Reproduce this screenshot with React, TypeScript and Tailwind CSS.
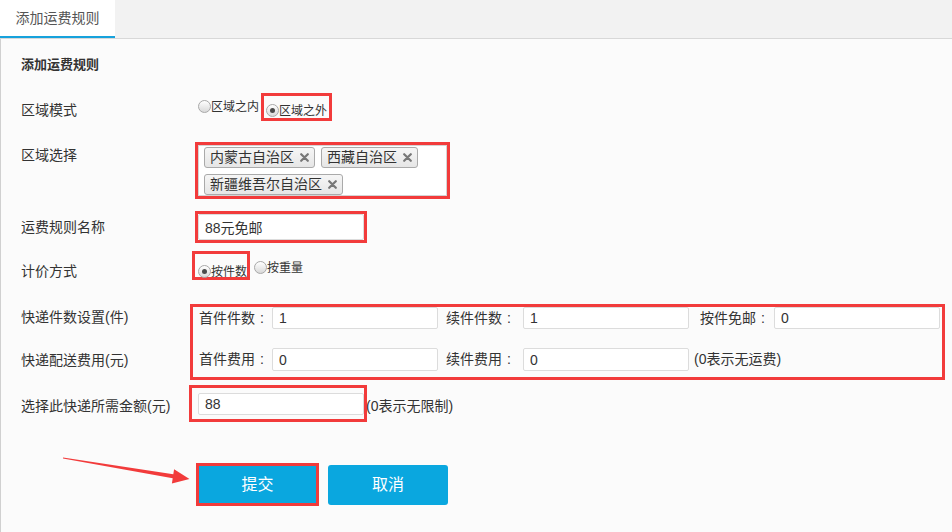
import React from "react";

const RED = "border-[#f23b3b]";

function Radio({ checked, label }: { checked?: boolean; label: string }) {
  return (
    <span className="inline-flex items-center h-[16px]">
      <span className="w-[13px] h-[13px] rounded-full border border-[#a8a8a8] bg-linear-to-b from-white to-[#d9d9d9] flex items-center justify-center shrink-0">
        {checked && <span className="w-[5px] h-[5px] rounded-full bg-[#4a4a4a]" />}
      </span>
      <span className="text-[12px] leading-[16px] pt-[1px] text-[#333]">{label}</span>
    </span>
  );
}

function Tag({ label }: { label: string }) {
  return (
    <span className="inline-flex items-center gap-[6px] h-[21px] px-[5px] border border-[#aaaaaa] rounded-[3px] bg-linear-to-b from-[#f6f6f6] to-[#e6e6e6] text-[14px] leading-[19px] text-[#333]">
      {label}
      <svg width="9" height="9" viewBox="0 0 9 9">
        <path d="M1.2 1.2 L7.8 7.8 M7.8 1.2 L1.2 7.8" stroke="#777" strokeWidth="2.2" strokeLinecap="round" />
      </svg>
    </span>
  );
}

function Field({ value, className = "" }: { value: string; className?: string }) {
  return (
    <input
      readOnly
      defaultValue={value}
      className={`w-[166px] bg-white border border-[#dcdcdc] rounded-[2px] px-[6px] text-[14px] text-[#333] outline-none ${className}`}
    />
  );
}

function Label({ children, className = "" }: { children: React.ReactNode; className?: string }) {
  return <div className={`w-[168px] shrink-0 text-[14px] leading-[20px] text-[#333] ${className}`}>{children}</div>;
}

function Caption({ text, className = "" }: { text: string; className?: string }) {
  return (
    <span className={`flex ${className}`}>
      {text}
      <span className="w-[14px] text-center">:</span>
    </span>
  );
}

export default function App() {
  return (
    <div className="relative w-[952px] h-[532px] overflow-hidden bg-[#fbfbfb] font-['Liberation_Sans','Noto_Sans_CJK_SC',sans-serif]">
      {/* tabs */}
      <div className="h-[39px] bg-[#f2f2f2] border-b border-[#d8d8d8] flex">
        <div className="w-[115px] h-[38px] bg-white border-b-2 border-[#17a2dc] flex items-center justify-center text-[14px] text-[#555]">
          添加运费规则
        </div>
      </div>

      <div className="border-l border-[#d0d0d0] h-[493px] pl-[20px]">
        <div className="pt-[16px] text-[13px] leading-[20px] font-bold text-[#333]">添加运费规则</div>

        {/* 区域模式 */}
        <div className="flex mt-[18px]">
          <Label className="pt-[7px]">区域模式</Label>
          <div className="flex items-start ml-[9px]">
            <div className="mt-[3px]">
              <Radio label="区域之内" />
            </div>
            <div className={`ml-[2px] h-[28px] border-[3px] ${RED} px-[2px]`}>
              <Radio checked label="区域之外" />
            </div>
          </div>
        </div>

        {/* 区域选择 */}
        <div className="flex mt-[21px]">
          <Label className="pt-[3px]">区域选择</Label>
          <div className={`ml-[6px] w-[255px] h-[57px] border-[3px] ${RED}`}>
            <div className="w-full h-full bg-white border border-[#d4d4d4] flex flex-wrap content-start gap-[6px] pl-[5px] pt-[1px]">
              <Tag label="内蒙古自治区" />
              <Tag label="西藏自治区" />
              <Tag label="新疆维吾尔自治区" />
            </div>
          </div>
        </div>

        {/* 运费规则名称 */}
        <div className="flex mt-[12px]">
          <Label className="pt-[6px]">运费规则名称</Label>
          <div className={`ml-[6px] border-[3px] ${RED} flex`}>
            <Field value="88元免邮" className="h-[26px]" />
          </div>
        </div>

        {/* 计价方式 */}
        <div className="flex mt-[8px]">
          <Label className="pt-[10px]">计价方式</Label>
          <div className="flex items-start ml-[3px]">
            <div className={`h-[29px] border-[3px] ${RED} pl-[3px] pt-[3px]`}>
              <Radio checked label="按件数" />
            </div>
            <div className="ml-[4px] mt-[6px]">
              <Radio label="按重量" />
            </div>
          </div>
        </div>

        {/* 快递件数 / 配送费用 */}
        <div className="flex mt-[23px]">
          <Label>
            <div className="mt-[2px] h-[22px] flex items-center">快递件数设置(件)</div>
            <div className="mt-[20px] h-[23px] flex items-center">快递配送费用(元)</div>
          </Label>
          <div className={`ml-[1px] w-[755px] h-[76px] border-[3px] ${RED} text-[14px] text-[#333]`}>
            <div className="flex items-center h-[22px]">
              <Caption text="首件件数" className="ml-[6px] w-[73px]" />
              <Field value="1" className="h-full" />
              <Caption text="续件件数" className="ml-[8px] w-[77px]" />
              <Field value="1" className="h-full" />
              <Caption text="按件免邮" className="ml-[11px] w-[74px]" />
              <Field value="0" className="h-full" />
            </div>
            <div className="flex items-center h-[23px] mt-[19px]">
              <Caption text="首件费用" className="ml-[6px] w-[73px]" />
              <Field value="0" className="h-full" />
              <Caption text="续件费用" className="ml-[8px] w-[77px]" />
              <Field value="0" className="h-full" />
              <span className="ml-[5px]">(0表示无运费)</span>
            </div>
          </div>
        </div>

        {/* 金额 */}
        <div className="flex mt-[5px]">
          <Label className="pt-[11px]">选择此快递所需金额(元)</Label>
          <div className={`border-[3px] ${RED} pl-[6px] pt-[5px] pb-[4px] flex`}>
            <Field value="88" className="h-[22px]" />
          </div>
          <span className="mt-[11px] ml-[-1px] text-[14px] leading-[20px] text-[#333]">(0表示无限制)</span>
        </div>

        {/* buttons */}
        <div className="flex items-start mt-[41px] pl-[175px]">
          <div className={`border-[3px] ${RED}`}>
            <button className="w-[117px] h-[37px] bg-[#0aa7df] text-white text-[16px] flex items-center justify-center">
              提交
            </button>
          </div>
          <button className="ml-[9px] mt-[2px] w-[120px] h-[40px] rounded-[3px] bg-[#0aa7df] text-white text-[16px] flex items-center justify-center">
            取消
          </button>
        </div>
      </div>

      {/* annotation arrow */}
      <svg className="absolute left-0 top-0 pointer-events-none" width="952" height="532">
        <polygon
          points="63,457.4 173.3,474.3 174.1,469.2 189.5,479 171.9,483.4 172.7,478.3 63,458.6"
          fill="#f23b3b"
        />
      </svg>
    </div>
  );
}
